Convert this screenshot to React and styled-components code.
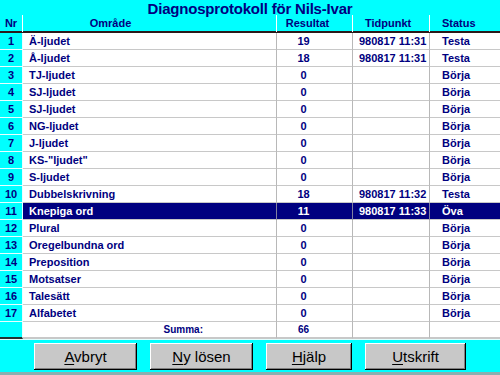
import React from "react";
import styled, { createGlobalStyle } from "styled-components";

const Global = createGlobalStyle`
  html, body { margin: 0; padding: 0; background: #00ffff; }
  body { width: 500px; height: 375px; overflow: hidden; font-family: "Liberation Sans", Arial, sans-serif; }
`;

const Page = styled.div`
  width: 500px;
  height: 375px;
  display: flex;
  flex-direction: column;
  background: #00ffff;
`;

const Title = styled.div`
  height: 15px;
  line-height: 17px;
  text-align: center;
  font-weight: bold;
  font-size: 15px;
  letter-spacing: -0.2px;
  color: #000080;
`;

const COLS = "23px 254px 76px 77px 70px";

const HeaderRow = styled.div`
  display: grid;
  grid-template-columns: ${COLS};
  height: 16px;
  border-bottom: 2px solid #2a1a1a;
`;

const HeadCell = styled.div`
  border-right: 1px solid #ffffff;
  font-size: 11px;
  font-weight: bold;
  color: #000080;
  line-height: 17px;
  text-align: ${(p) => p.$align || "left"};
  padding-left: ${(p) => p.$pl || 0}px;
  padding-right: ${(p) => p.$pr || 0}px;
  &:last-child { border-right: none; }
`;

const Row = styled.div`
  display: grid;
  grid-template-columns: ${COLS};
  height: 17px;
`;

const NrCell = styled.div`
  background: #00ffff;
  border-bottom: 2px solid ${(p) => (p.$last ? "#203030" : "#e8ffff")};
  border-right: 1px solid #e8ffff;
  font-size: 11px;
  font-weight: bold;
  color: #000080;
  text-align: center;
  line-height: 16px;
`;

const Cell = styled.div`
  background: ${(p) => (p.$sel ? "#000080" : "#ffffff")};
  color: ${(p) => (p.$sel ? "#ffffff" : "#000080")};
  border-bottom: 2px solid #c8c8c8;
  border-right: 1px solid ${(p) => (p.$sel ? "#8080a0" : "#b8b8b8")};
  font-size: ${(p) => (p.$small ? 10 : 11)}px;
  font-weight: bold;
  line-height: 16px;
  white-space: nowrap;
  overflow: hidden;
  text-align: ${(p) => p.$align || "left"};
  padding-left: ${(p) => p.$pl || 0}px;
  padding-right: ${(p) => p.$pr || 0}px;
  &:last-child { border-right: none; }
`;

const Band = styled.div`
  flex: 1;
  border-top: 1px solid #e0ffff;
  border-bottom: 3px solid #8ab0b0;
  display: flex;
  align-items: center;
  padding-left: 34px;
  gap: 13px;
`;

const Button = styled.button`
  width: ${(p) => p.$w}px;
  height: 27px;
  margin: 0;
  padding: 0;
  background: #c8c8c8;
  border: none;
  box-shadow: inset -1px -1px 0 #000000, inset 1px 1px 0 #ffffff, inset -2px -2px 0 #808080;
  font-family: "Liberation Sans", Arial, sans-serif;
  font-size: 15px;
  color: #000000;
  cursor: default;
  u { text-decoration: underline; text-underline-offset: 2px; }
`;

const rows = [
  [1, "Ä-ljudet", "19", "980817 11:31", "Testa"],
  [2, "Å-ljudet", "18", "980817 11:31", "Testa"],
  [3, "TJ-ljudet", "0", "", "Börja"],
  [4, "SJ-ljudet", "0", "", "Börja"],
  [5, "SJ-ljudet", "0", "", "Börja"],
  [6, "NG-ljudet", "0", "", "Börja"],
  [7, "J-ljudet", "0", "", "Börja"],
  [8, "KS-\"ljudet\"", "0", "", "Börja"],
  [9, "S-ljudet", "0", "", "Börja"],
  [10, "Dubbelskrivning", "18", "980817 11:32", "Testa"],
  [11, "Knepiga ord", "11", "980817 11:33", "Öva"],
  [12, "Plural", "0", "", "Börja"],
  [13, "Oregelbundna ord", "0", "", "Börja"],
  [14, "Preposition", "0", "", "Börja"],
  [15, "Motsatser", "0", "", "Börja"],
  [16, "Talesätt", "0", "", "Börja"],
  [17, "Alfabetet", "0", "", "Börja"],
];

export default function App() {
  return (
    <Page>
      <Global />
      <Title>Diagnosprotokoll för Nils-Ivar</Title>
      <HeaderRow>
        <HeadCell $align="center">Nr</HeadCell>
        <HeadCell $align="center" $pr={78}>Område</HeadCell>
        <HeadCell $align="center" $pr={14}>Resultat</HeadCell>
        <HeadCell $pl={12}>Tidpunkt</HeadCell>
        <HeadCell $pl={12}>Status</HeadCell>
      </HeaderRow>
      {rows.map(([nr, omr, res, tid, st]) => {
        const sel = nr === 11;
        return (
          <Row key={nr}>
            <NrCell>{nr}</NrCell>
            <Cell $sel={sel} $pl={6}>{omr}</Cell>
            <Cell $sel={sel} $align="center" $pr={22}>{res}</Cell>
            <Cell $sel={sel} $pl={6}>{tid}</Cell>
            <Cell $sel={sel} $pl={12}>{st}</Cell>
          </Row>
        );
      })}
      <Row>
        <NrCell $last />
        <Cell $align="right" $pr={73} $small>Summa:</Cell>
        <Cell $align="center" $pr={22} $small>66</Cell>
        <Cell />
        <Cell />
      </Row>
      <Band>
        <Button $w={103}><u>A</u>vbryt</Button>
        <Button $w={103}><u>N</u>y lösen</Button>
        <Button $w={86}><u>H</u>jälp</Button>
        <Button $w={101}><u>U</u>tskrift</Button>
      </Band>
    </Page>
  );
}
